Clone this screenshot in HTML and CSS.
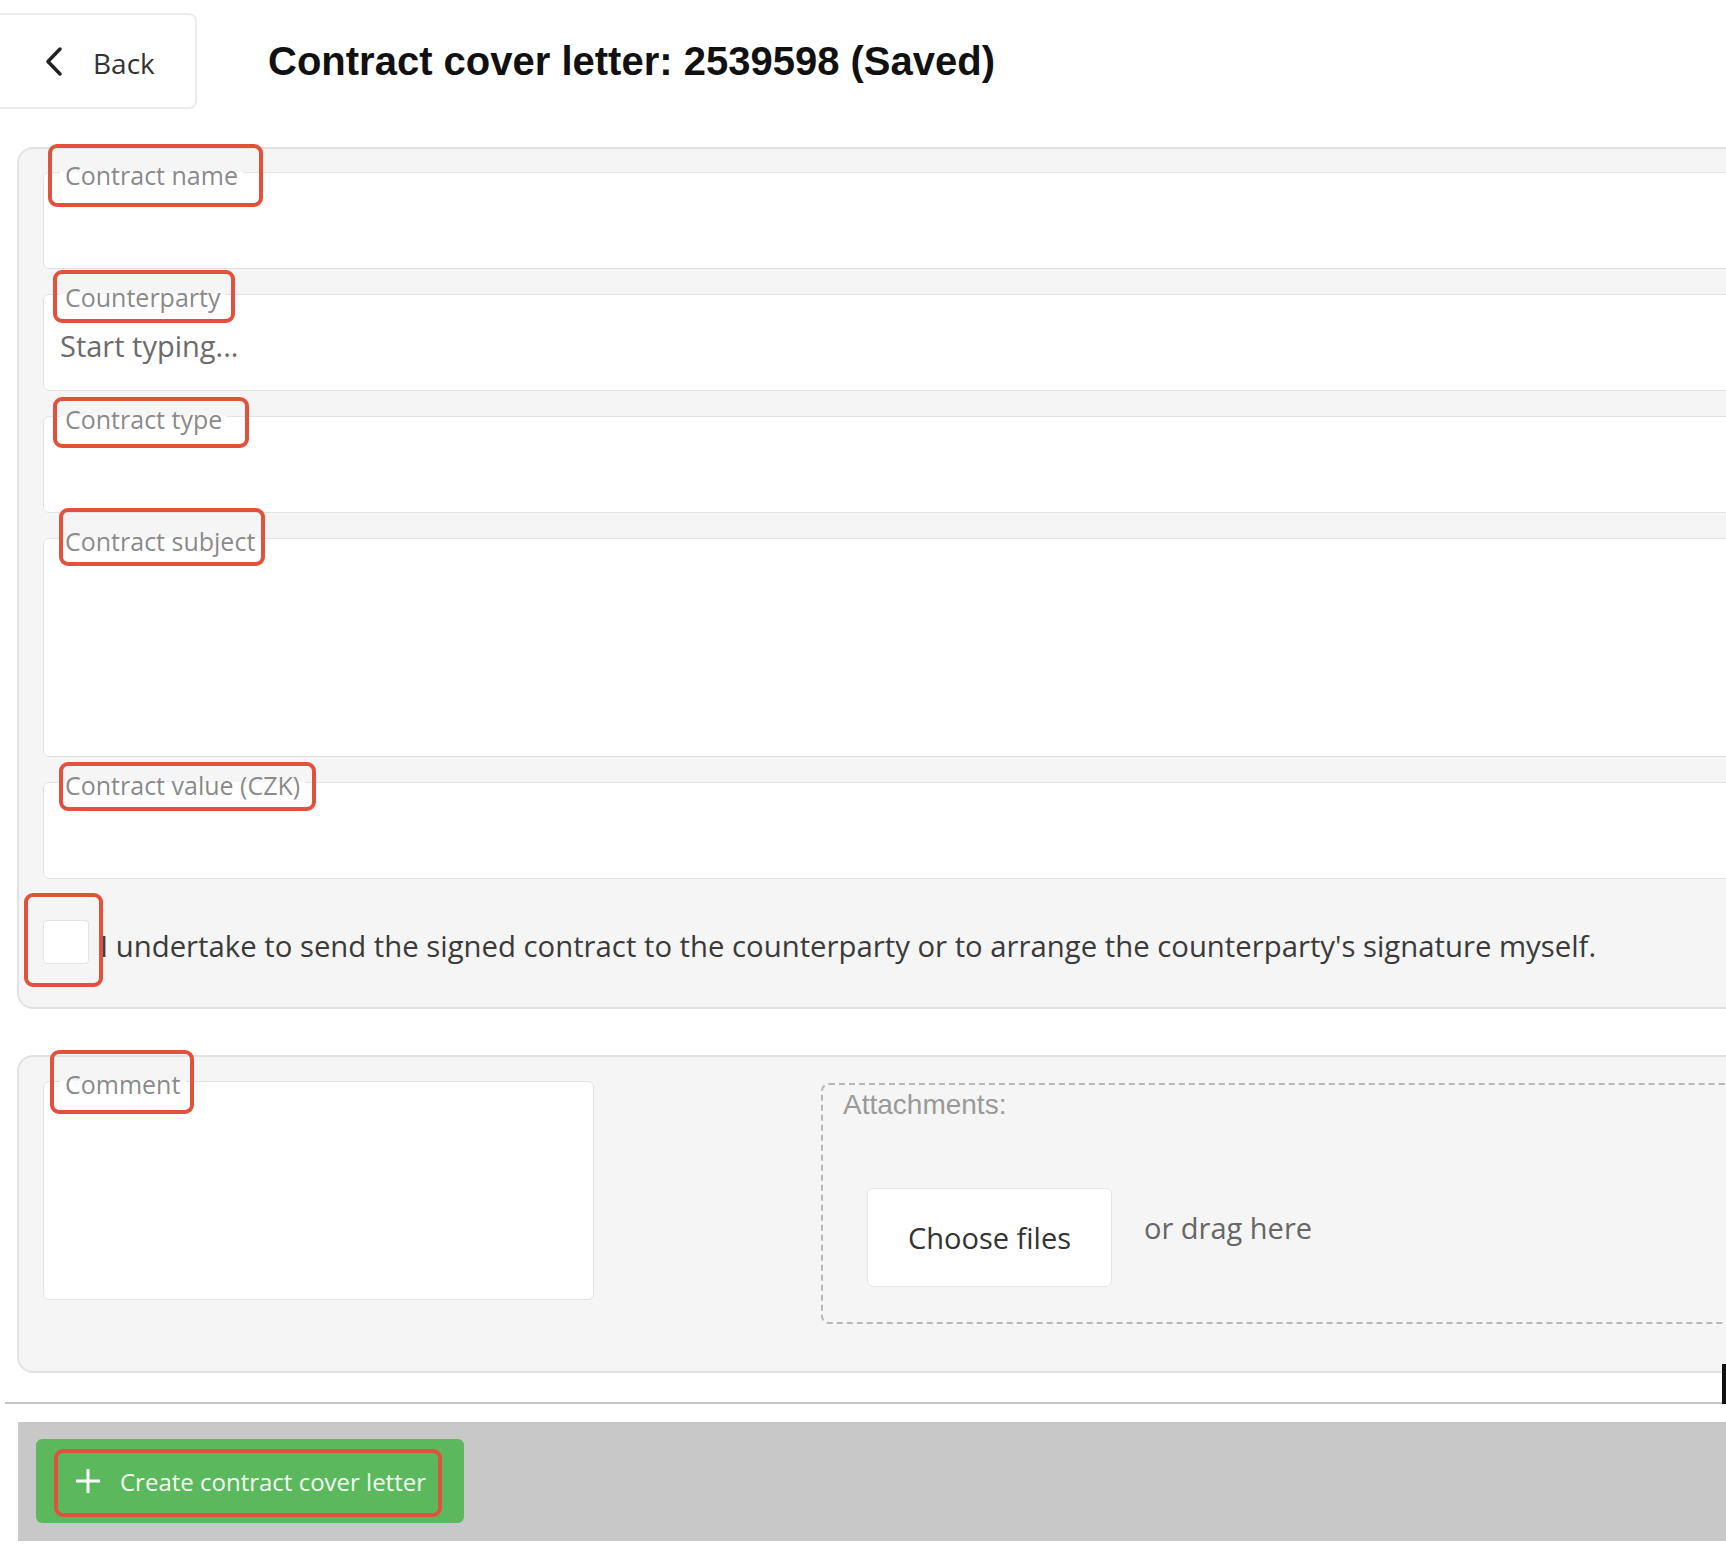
FILE: index.html
```html
<!DOCTYPE html>
<html lang="en">
<head>
    <meta charset="UTF-8">
    <meta name="viewport" content="width=device-width, initial-scale=1.0">
    <title>Contract cover letter</title>
    <link rel="stylesheet" href="styles.css">
</head>
<body>
    <div class="header">
        <button class="back-button">
            <svg class="back-icon" width="18" height="31" viewBox="0 0 18 31">
                <polyline points="15,3 3,15.5 15,28" fill="none" stroke="#222" stroke-width="3.5" stroke-linecap="round" stroke-linejoin="round"/>
            </svg>
            <span class="back-text">Back</span>
        </button>
        <h1 class="title">Contract cover letter: 2539598 (Saved)</h1>
    </div>

    <div class="panel panel-main">
        <fieldset class="field">
            <legend class="field-label mark mark-name">Contract name</legend>
            <input class="field-input" type="text">
        </fieldset>
        <fieldset class="field">
            <legend class="field-label mark mark-counterparty">Counterparty</legend>
            <input class="field-input" type="text" placeholder="Start typing...">
        </fieldset>
        <fieldset class="field">
            <legend class="field-label mark mark-type">Contract type</legend>
            <input class="field-input" type="text">
        </fieldset>
        <fieldset class="field">
            <legend class="field-label mark mark-subject">Contract subject</legend>
            <textarea class="field-area"></textarea>
        </fieldset>
        <fieldset class="field">
            <legend class="field-label mark mark-value">Contract value (CZK)</legend>
            <input class="field-input" type="text">
        </fieldset>
        <div class="check-row">
            <span class="check-wrap mark mark-check">
                <input type="checkbox" class="checkbox" id="undertake">
            </span>
            <label class="check-text" for="undertake">I undertake to send the signed contract to the counterparty or to arrange the counterparty's signature myself.</label>
        </div>
    </div>

    <div class="panel panel-extra">
        <fieldset class="field field-comment">
            <legend class="field-label mark mark-comment">Comment</legend>
            <textarea class="field-area"></textarea>
        </fieldset>
        <div class="dropzone">
            <div class="dropzone-title">Attachments:</div>
            <div class="dropzone-row">
                <button class="choose-button">Choose files</button>
                <span class="drag-text">or drag here</span>
            </div>
        </div>
    </div>

    <div class="divider"></div>

    <div class="footer-bar">
        <button class="create-button">
            <svg class="plus-icon" width="26" height="26" viewBox="0 0 26 26">
                <line x1="13" y1="1" x2="13" y2="25" stroke="#fff" stroke-width="3"/>
                <line x1="1" y1="13" x2="25" y2="13" stroke="#fff" stroke-width="3"/>
            </svg>
            <span>Create contract cover letter</span>
        </button>
    </div>
</body>
</html>
```

FILE: styles.css
```css
html, body {
    background: #ffffff;
}
body {
    margin: 0;
    width: 1726px;
    overflow: hidden;
    font-family: "Open Sans", "Noto Sans", sans-serif;
    color: #333;
}
button, input, textarea {
    font-family: "Open Sans", "Noto Sans", sans-serif;
}

/* header */
.header {
    display: flex;
    align-items: center;
    padding-top: 13px;
}
.back-button {
    display: flex;
    align-items: center;
    box-sizing: border-box;
    width: 207px;
    height: 96px;
    margin-left: -10px;
    padding: 0 0 0 53px;
    background: #ffffff;
    border: 2px solid #ececec;
    border-radius: 8px;
    cursor: pointer;
}
.back-icon {
    flex: none;
}
.back-text {
    margin-left: 30px;
    padding-top: 4px;
    font-size: 28px;
    color: #333;
}
.title {
    margin: 0 0 0 71px;
    font-family: "Liberation Sans", Arial, sans-serif;
    font-size: 40px;
    font-weight: bold;
    color: #111;
}

/* panels */
.panel {
    margin-left: 17px;
    margin-right: -60px;
    background: #f5f5f5;
    border: 2px solid #e3e3e3;
    border-radius: 16px;
}
.panel-main {
    margin-top: 38px;
    padding: 4px 24px 0;
}
.panel-extra {
    display: flex;
    align-items: flex-start;
    margin-top: 46px;
    padding: 5px 24px 47px;
}

/* fields */
.field {
    margin: 0;
    padding: 0 16px;
    min-width: 0;
    background: #ffffff;
    border: 1px solid #e2e2e2;
    border-radius: 6px;
}
.field + .field {
    margin-top: 6px;
}
.field-label {
    padding: 5px 5px 0;
    font-size: 25px;
    color: #8a8a8a;
}
.field-input {
    display: block;
    box-sizing: border-box;
    width: 100%;
    height: 76px;
    padding: 11px 0 25px;
    border: none;
    outline: none;
    background: transparent;
    font-size: 29px;
    color: #333;
}
.field-input::placeholder {
    color: #6b6b6b;
}
.field-area {
    display: block;
    box-sizing: border-box;
    width: 100%;
    height: 198px;
    padding: 0;
    border: none;
    outline: none;
    resize: none;
    background: transparent;
    font-size: 29px;
}

/* checkbox row */
.check-row {
    display: flex;
    align-items: flex-start;
    padding: 41px 0;
}
.check-wrap {
    display: block;
    flex: none;
    width: 46px;
    height: 44px;
}
.checkbox {
    appearance: none;
    display: block;
    box-sizing: border-box;
    width: 46px;
    height: 44px;
    margin: 0;
    background: #ffffff;
    border: 1px solid #e4e4e4;
    border-radius: 4px;
}
.check-text {
    margin: 6px 0 0 11px;
    font-size: 29.3px;
    color: #3a3a3a;
    white-space: nowrap;
}

/* comment + attachments */
.field-comment {
    flex: none;
    box-sizing: border-box;
    width: 551px;
}
.dropzone {
    flex: 1;
    box-sizing: border-box;
    height: 241px;
    margin: 21px 0 0 227px;
    padding: 4px 20px 0;
    border: 2px dashed #b8b8b8;
    border-radius: 8px;
}
.dropzone-title {
    font-family: "Liberation Sans", Arial, sans-serif;
    font-size: 28px;
    line-height: 32px;
    color: #9a9a9a;
}
.dropzone-row {
    display: flex;
    align-items: flex-start;
    margin: 67px 0 0 24px;
}
.choose-button {
    width: 245px;
    height: 99px;
    padding: 0;
    background: #ffffff;
    border: 1px solid #e6e6e6;
    border-radius: 6px;
    font-size: 29px;
    color: #333;
    cursor: pointer;
}
.drag-text {
    margin: 20px 0 0 32px;
    font-size: 29px;
    color: #666;
}

/* bottom */
.divider {
    position: relative;
    height: 2px;
    margin: 29px 0 0 5px;
    background: #c6c6c6;
}
.divider::after {
    content: "";
    position: absolute;
    right: 0;
    bottom: 0;
    width: 4px;
    height: 40px;
    background: #111;
}
.footer-bar {
    box-sizing: border-box;
    height: 119px;
    margin: 18px 0 0 18px;
    padding: 17px 18px;
    background: #c8c8c8;
}
.create-button {
    position: relative;
    display: flex;
    align-items: center;
    gap: 19px;
    width: 428px;
    height: 84px;
    padding: 0 0 0 39px;
    background: #5cb85c;
    border: none;
    border-radius: 6px;
    font-size: 24px;
    color: #f4fff4;
    cursor: pointer;
}
.create-button::after {
    content: "";
    position: absolute;
    top: 10px;
    right: 22px;
    bottom: 6px;
    left: 18px;
    border: 4px solid #e2513c;
    border-radius: 9px;
}

/* red highlight boxes */
.mark {
    position: relative;
}
.mark::after {
    content: "";
    position: absolute;
    top: var(--t);
    right: var(--r);
    bottom: var(--b);
    left: var(--l);
    border: 4px solid #e2513c;
    border-radius: 9px;
    pointer-events: none;
}
.mark-name { --t: -9px; --r: -20px; --b: -15px; --l: -12px; }
.mark-counterparty { --t: -5px; --r: -10px; --b: -9px; --l: -7px; }
.mark-type { --t: 0px; --r: -22px; --b: -12px; --l: -7px; }
.mark-subject { --t: -11px; --r: -5px; --b: -8px; --l: -1px; }
.mark-value { --t: -1px; --r: -11px; --b: -9px; --l: -1px; }
.mark-comment { --t: -12px; --r: -9px; --b: -13px; --l: -10px; }
.mark-check { --t: -27px; --r: -14px; --b: -23px; --l: -19px; }
```
